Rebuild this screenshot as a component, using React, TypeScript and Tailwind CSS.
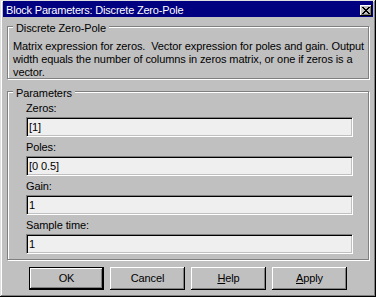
import React from "react";

const F = "font-['Liberation_Sans_Narrow','Liberation_Sans',Arial,sans-serif]";

function Field({ label, value }: { label: React.ReactNode; value: string }) {
  return (
    <div className="flex flex-col">
      <div className="h-[13px] leading-[13px] whitespace-nowrap">{label}</div>
      <div className="mt-[2px] h-[20px] w-[327px] bg-[#efefef] border border-t-[#808080] border-l-[#808080] border-b-white border-r-white shadow-[inset_1px_1px_0_#000,inset_-1px_-1px_0_#c0c0c0] pl-[2px] pt-[3px] leading-[13px] whitespace-pre">
        {value}
      </div>
    </div>
  );
}

function Btn({ children, def }: { children: React.ReactNode; def?: boolean }) {
  return (
    <div
      className={`w-[75px] h-[23px] flex items-center justify-center leading-[13px] ${
        def
          ? "border border-black shadow-[inset_-1px_-1px_0_#000,inset_1px_1px_0_#fff,inset_-2px_-2px_0_#808080]"
          : "shadow-[inset_-1px_-1px_0_#000,inset_1px_1px_0_#fff,inset_-2px_-2px_0_#808080]"
      }`}
    >
      {children}
    </div>
  );
}

export default function App() {
  return (
    <div
      className={`w-[376px] h-[297px] bg-[#c0c0c0] flex flex-col pt-[1px] px-[3px] text-[11px] tracking-[-0.1px] text-black shadow-[inset_-1px_-1px_0_#000,inset_1px_1px_0_#dfdfdf,inset_-2px_-2px_0_#808080,inset_2px_2px_0_#fff] ${F}`}
    >
      {/* title bar */}
      <div className="h-[16px] bg-[#000080] flex items-start justify-between pl-[3px] pr-[1px]">
        <span className="text-white leading-[13px] pt-[3px] tracking-[-0.2px] whitespace-nowrap">
          Block Parameters: Discrete Zero-Pole
        </span>
        <div className="mt-[4px] w-[12px] h-[11px] bg-[#c0c0c0] flex items-center justify-center shadow-[inset_-1px_-1px_0_#000,inset_1px_1px_0_#fff,inset_-2px_-2px_0_#808080]">
          <svg width="8" height="7" viewBox="0 0 8 7" shapeRendering="crispEdges" className="-mt-[1px] -ml-[1px]">
            <path
              d="M0 0h2v1h-2z M6 0h2v1h-2z M1 1h2v1h-2z M5 1h2v1h-2z M2 2h4v1h-4z M3 3h2v1h-2z M2 4h4v1h-4z M1 5h2v1h-2z M5 5h2v1h-2z M0 6h2v1h-2z M6 6h2v1h-2z"
              fill="#000"
            />
          </svg>
        </div>
      </div>

      {/* group 1 */}
      <div className="mx-[4px] mt-[9px] h-[53px] border border-[#808080] shadow-[1px_1px_0_#fff,inset_1px_1px_0_#fff] flex flex-col px-[5px]">
        <span className="-mt-[5px] self-start px-[3px] bg-[#c0c0c0] leading-[13px] whitespace-nowrap">
          Discrete Zero-Pole
        </span>
        <div className="mt-[5px] leading-[13px] whitespace-pre">
          <div>Matrix expression for zeros.  Vector expression for poles and gain. Output</div>
          <div>width equals the number of columns in zeros matrix, or one if zeros is a</div>
          <div>vector.</div>
        </div>
      </div>

      {/* group 2 */}
      <div className="mx-[4px] mt-[12px] h-[169px] border border-[#808080] shadow-[1px_1px_0_#fff,inset_1px_1px_0_#fff] flex flex-col px-[5px]">
        <span className="-mt-[5px] self-start px-[3px] bg-[#c0c0c0] leading-[13px] whitespace-nowrap">
          Parameters
        </span>
        <div className="mt-[2px] pl-[13px] flex flex-col gap-[4px]">
          <Field label="Zeros:" value="[1]" />
          <Field label="Poles:" value="[0 0.5]" />
          <Field label="Gain:" value="1" />
          <Field label="Sample time:" value="1" />
        </div>
      </div>

      {/* buttons */}
      <div className="mt-[7px] flex justify-center gap-[6px]">
        <Btn def>OK</Btn>
        <Btn>Cancel</Btn>
        <Btn>
          <span>
            <span className="underline">H</span>elp
          </span>
        </Btn>
        <Btn>
          <span>
            <span className="underline">A</span>pply
          </span>
        </Btn>
      </div>
    </div>
  );
}
